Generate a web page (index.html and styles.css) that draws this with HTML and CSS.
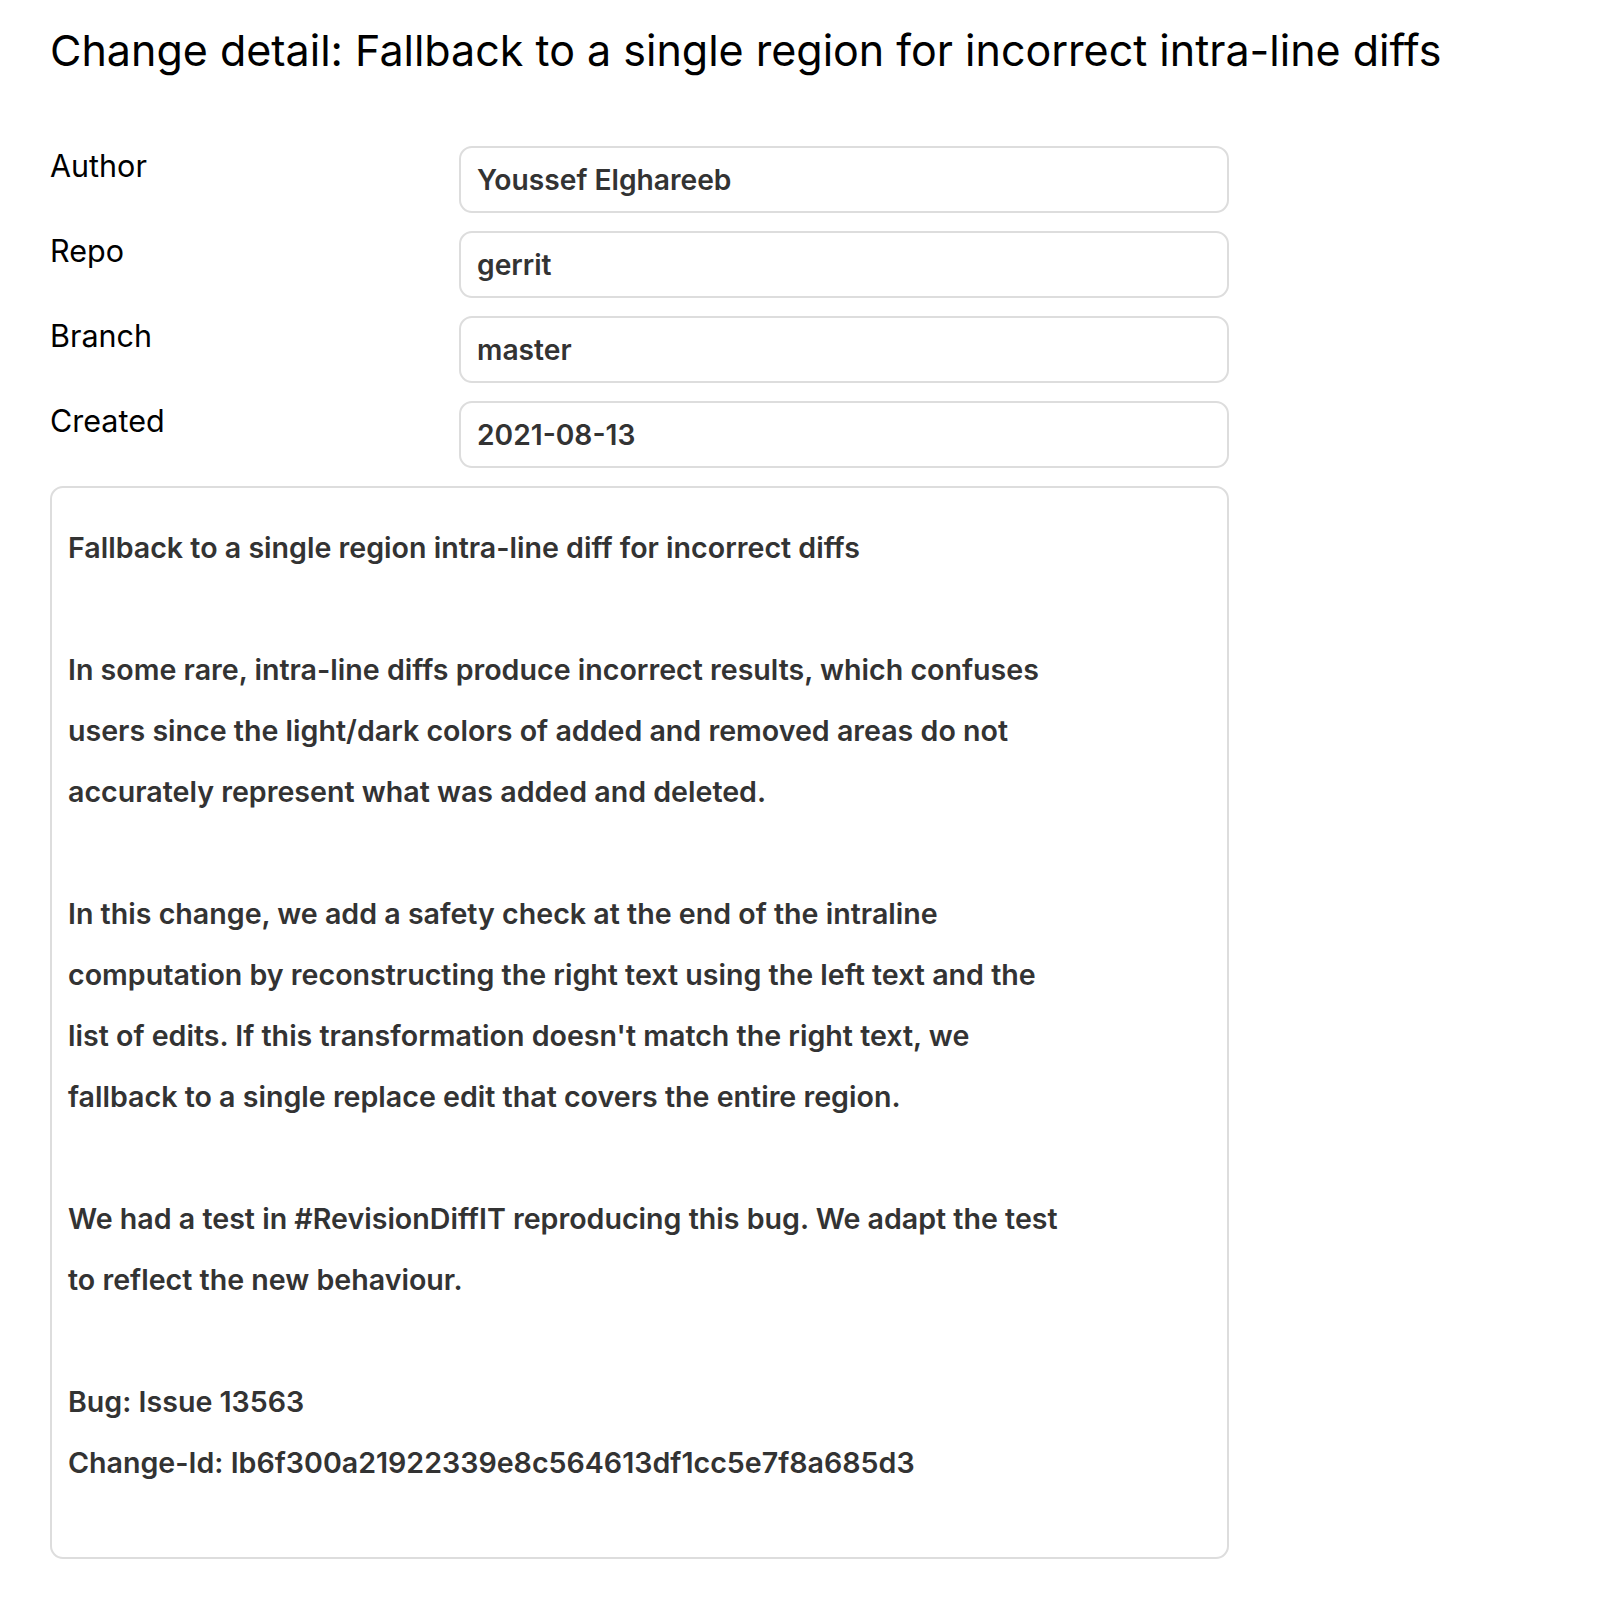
FILE: index.html
```html
<!DOCTYPE html>
<html lang="en">
<head>
<meta charset="utf-8">
<title>Change detail</title>
<link rel="stylesheet" href="styles.css">
</head>
<body>
<main class="page">
  <h1 class="title">Change detail: Fallback to a single region for incorrect intra-line diffs</h1>
  <section class="fields">
    <div class="label">Author</div>
    <div class="value">Youssef Elghareeb</div>
    <div class="label">Repo</div>
    <div class="value">gerrit</div>
    <div class="label">Branch</div>
    <div class="value">master</div>
    <div class="label">Created</div>
    <div class="value">2021-08-13</div>
  </section>
  <div class="message">Fallback to a single region intra-line diff for incorrect diffs

In some rare, intra-line diffs produce incorrect results, which confuses
users since the light/dark colors of added and removed areas do not
accurately represent what was added and deleted.

In this change, we add a safety check at the end of the intraline
computation by reconstructing the right text using the left text and the
list of edits. If this transformation doesn't match the right text, we
fallback to a single replace edit that covers the entire region.

We had a test in #RevisionDiffIT reproducing this bug. We adapt the test
to reflect the new behaviour.

Bug: Issue 13563
Change-Id: Ib6f300a21922339e8c564613df1cc5e7f8a685d3</div>
</main>
</body>
</html>
```

FILE: styles.css
```css
html, body {
  margin: 0;
  padding: 0;
  background: #ffffff;
}

body {
  font-family: Inter, "Noto Sans", "Liberation Sans", sans-serif;
  color: #000000;
}

.page {
  padding: 22px 0 40px 50px;
  width: 1179px;
}

.title {
  margin: 0;
  font-size: 43px;
  font-weight: 400;
  line-height: 56px;
  white-space: nowrap;
  color: #000000;
}

.fields {
  margin-top: 68px;
  display: grid;
  grid-template-columns: 409px 770px;
  grid-auto-rows: 67px;
  row-gap: 18px;
}

.label {
  padding-top: 2px;
  font-size: 30.5px;
  line-height: 36px;
  color: #000000;
}

.value {
  box-sizing: border-box;
  border: 2px solid #dddddd;
  border-radius: 13px;
  padding: 0 16px;
  display: flex;
  align-items: center;
  font-size: 28.2px;
  font-weight: 600;
  color: #333333;
}

.message {
  box-sizing: border-box;
  margin-top: 18px;
  height: 1073px;
  border: 2px solid #dddddd;
  border-radius: 13px;
  padding: 29px 16px 0 16px;
  white-space: pre-wrap;
  font-size: 28.6px;
  font-weight: 600;
  line-height: 61px;
  color: #333333;
}
```
